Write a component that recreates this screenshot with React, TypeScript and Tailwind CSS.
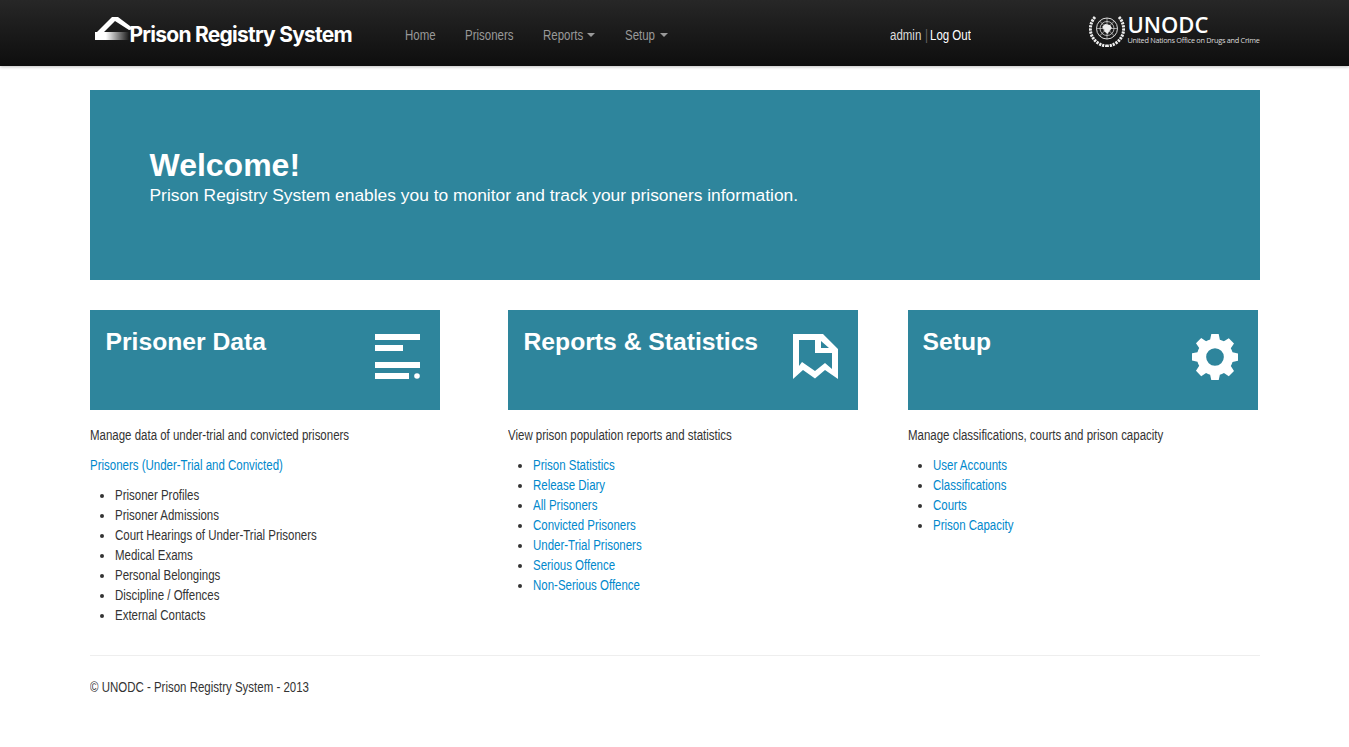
import React from 'react';

// condensed text: the installed fonts have no Helvetica Condensed, so squeeze Liberation Sans
const T = ({ children }: { children: React.ReactNode }) => (
  <span className="inline-block origin-left scale-x-[0.82] whitespace-nowrap">{children}</span>
);

const Caret = () => (
  <span className="absolute top-[8px] inline-block w-0 h-0 border-x-4 border-x-transparent border-t-4 border-t-[#999]" />
);

const LogoMark = () => (
  <svg width="42" height="30" viewBox="0 0 42 30" className="absolute left-0 top-0">
    <defs>
      <linearGradient id="fade" x1="0" x2="1" y1="0" y2="0">
        <stop offset="0" stopColor="#fff" />
        <stop offset="0.3" stopColor="#fff" />
        <stop offset="0.95" stopColor="#fff" stopOpacity="0" />
      </linearGradient>
    </defs>
    <path d="M0 17 H36 V25 H0 Z" fill="url(#fade)" />
    <path d="M0 19 L17 2 L23 2 L39 14 L34 15 L20 6 L9 17 Z" fill="#fff" />
  </svg>
);

const UnEmblem = () => (
  <svg width="36" height="34" viewBox="0 0 36 34" fill="none" stroke="#eee">
    <circle cx="18" cy="15.5" r="10.5" strokeWidth="0.9" />
    <circle cx="18" cy="15.5" r="7" strokeWidth="0.7" />
    <circle cx="18" cy="15.5" r="3.5" strokeWidth="0.7" />
    <path d="M18 5V26M7.5 15.5H28.5M10.6 8l14.8 15M25.4 8L10.6 23" strokeWidth="0.6" />
    <path d="M13 14l3-3 5 1 2 3-3 3-1 3-3-2-1-3z" fill="#eee" stroke="none" />
    <path d="M6 4C-1 12 0 24 9 30c3 2 6 3 9 3" strokeWidth="3" strokeDasharray="2.2 0.9" />
    <path d="M30 4c7 8 6 20-3 26-3 2-6 3-9 3" strokeWidth="3" strokeDasharray="2.2 0.9" />
  </svg>
);

const ListIcon = () => (
  <svg width="45" height="45" viewBox="0 0 45 45" fill="#fff">
    <rect x="0" y="0" width="45" height="6" />
    <rect x="0" y="11" width="28" height="6" />
    <rect x="0" y="28" width="45" height="6" />
    <rect x="0" y="39" width="34" height="6" />
    <circle cx="42" cy="42" r="2.8" />
  </svg>
);

const BookmarkIcon = () => (
  <svg width="45" height="45" viewBox="0 0 45 45" fill="#fff" fillRule="evenodd">
    <path d="M0 0H30L45 15V45L32 36L22 44.5L10 36L0 45Z M6 6V32L9 28L22 37L32 29L39 35V19H22V6Z M28 7V14H36Z" />
  </svg>
);

const GearIcon = () => (
  <svg width="46" height="46" viewBox="0 0 1024 1024" fill="#fff">
    <path
      fillRule="evenodd"
      d="M430 0h164l26 126a400 400 0 0 1 91 38l108-71 116 116-71 108a400 400 0 0 1 38 91l122 26v164l-122 26a400 400 0 0 1-38 91l71 108-116 116-108-71a400 400 0 0 1-91 38l-26 124H430l-26-124a400 400 0 0 1-91-38l-108 71L89 817l71-108a400 400 0 0 1-38-91L0 592V430l122-26a400 400 0 0 1 38-91L89 205 205 89l108 71a400 400 0 0 1 91-38zM512 315a197 197 0 1 0 0 394 197 197 0 0 0 0-394z"
    />
  </svg>
);

const Panel = ({ title, icon, titleClass = 'pl-4' }: { title: string; icon: React.ReactNode; titleClass?: string }) => (
  <div className={`bg-[#2e859c] h-[100px] w-[350px] flex justify-between pt-[16px] pr-5 ${titleClass}`}>
    <h2 className="font-bold text-[24.7px] leading-[32px] text-white">{title}</h2>
    <div className="pt-2">{icon}</div>
  </div>
);

const Bullets = ({ items, link }: { items: string[]; link?: boolean }) => (
  <ul className="list-disc pl-[25px] mb-[10px] marker:text-[#333]">
    {items.map((item) => (
      <li key={item} className="h-5">
        {link ? <a className="text-[#0088cc]"><T>{item}</T></a> : <T>{item}</T>}
      </li>
    ))}
  </ul>
);

const App: React.FC = () => {
  return (
    <div className="min-h-[747px] bg-white text-[#333] text-[14px] leading-5 font-['Liberation_Sans',sans-serif]">
      {/* Navbar */}
      <nav className="h-[66px] bg-gradient-to-b from-[#272727] to-[#0e0e0e] shadow-[0_1px_3px_rgba(0,0,0,0.25)]">
        <div className="w-[1170px] mx-auto flex items-center h-full">
          <div className="relative w-[315px] h-full pl-[5px] pt-[15px]">
            <div className="relative h-[32px]">
              <LogoMark />
              <span className="absolute left-[35px] top-[6px] whitespace-nowrap font-['Inter'] font-bold text-[21px] leading-7 tracking-[-0.75px] text-white">
                Prison Registry System
              </span>
            </div>
          </div>
          <div className="flex text-[#999] pt-[4px]">
            <a className="w-[60px]"><T>Home</T></a>
            <a className="w-[78px]"><T>Prisoners</T></a>
            <a className="w-[82px] relative"><T>Reports</T><span className="absolute left-[44px] top-0"><Caret /></span></a>
            <a className="w-[60px] relative"><T>Setup</T><span className="absolute left-[35px] top-0"><Caret /></span></a>
          </div>
          <div className="ml-[205px] pt-[4px] text-white flex">
            <span className="w-[35px] text-[#ddd]"><T>admin</T></span>
            <span className="w-[5px] text-[#666]"><T>|</T></span>
            <T>Log Out</T>
          </div>
          <div className="ml-auto flex items-center gap-[2px] text-white">
            <div className="mb-[6px]"><UnEmblem /></div>
            <div className="font-['Open_Sans'] mb-[7px]">
              <div className="text-[22px] leading-[22px] font-semibold">UNODC</div>
              <div className="text-[7.3px] leading-[11px] tracking-[-0.27px] text-[#ddd] whitespace-nowrap">United Nations Office on Drugs and Crime</div>
            </div>
          </div>
        </div>
      </nav>

      <main className="w-[1170px] mx-auto pt-6">
        {/* Hero */}
        <section className="bg-[#2e859c] h-[190px] pl-[60px] pt-[57px] text-white">
          <h1 className="font-bold text-[32px] leading-[36px]">Welcome!</h1>
          <p className="text-[17.4px] leading-[24px]">
            Prison Registry System enables you to monitor and track your prisoners information.
          </p>
        </section>

        <div className="flex mt-[30px]">
          <div className="w-[350px] mr-[68px]">
            <Panel title="Prisoner Data" icon={<ListIcon />} />
            <p className="mt-[15px] mb-[10px]"><T>Manage data of under-trial and convicted prisoners</T></p>
            <p className="mb-[10px]"><a className="text-[#0088cc]"><T>Prisoners (Under-Trial and Convicted)</T></a></p>
            <Bullets
              items={[
                'Prisoner Profiles',
                'Prisoner Admissions',
                'Court Hearings of Under-Trial Prisoners',
                'Medical Exams',
                'Personal Belongings',
                'Discipline / Offences',
                'External Contacts',
              ]}
            />
          </div>
          <div className="w-[350px] mr-[50px]">
            <Panel title="Reports & Statistics" icon={<BookmarkIcon />} />
            <p className="mt-[15px] mb-[10px]"><T>View prison population reports and statistics</T></p>
            <Bullets
              link
              items={[
                'Prison Statistics',
                'Release Diary',
                'All Prisoners',
                'Convicted Prisoners',
                'Under-Trial Prisoners',
                'Serious Offence',
                'Non-Serious Offence',
              ]}
            />
          </div>
          <div className="w-[350px]">
            <Panel title="Setup" icon={<GearIcon />} titleClass="pl-[15px]" />
            <p className="mt-[15px] mb-[10px]"><T>Manage classifications, courts and prison capacity</T></p>
            <Bullets link items={['User Accounts', 'Classifications', 'Courts', 'Prison Capacity']} />
          </div>
        </div>

        <footer className="mt-[20px] border-t border-[#eee] pt-[21px]">
          <p><T>© UNODC - Prison Registry System - 2013</T></p>
        </footer>
      </main>
    </div>
  );
};

export default App;
